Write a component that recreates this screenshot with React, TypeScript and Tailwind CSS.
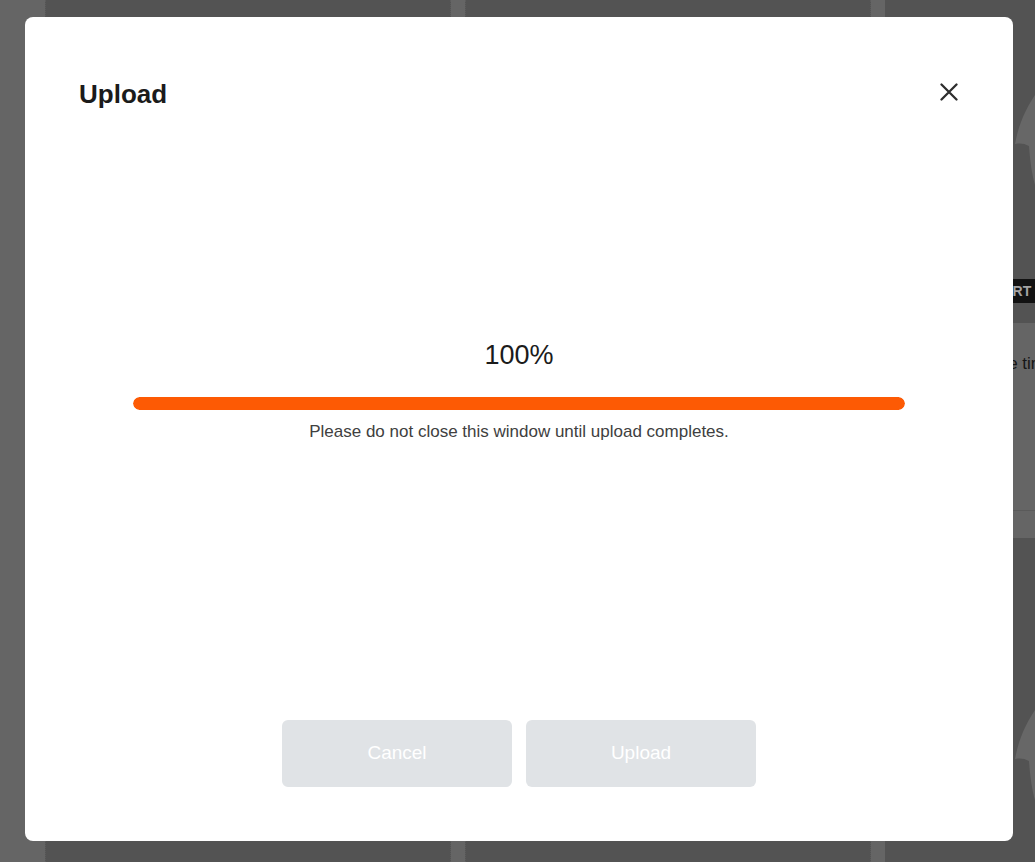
import React from "react";

const font = { fontFamily: '"Liberation Sans", Arial, Helvetica, sans-serif' };

// picture area of a background card; only its left edge peeks out behind the modal
function CardImage({ withLabel }: { withLabel?: boolean }) {
  return (
    <div className="relative h-[400px] shrink-0 bg-[#535353]">
      <svg
        className="absolute left-0 top-0"
        width="406"
        height="400"
        viewBox="0 0 406 400"
        aria-hidden="true"
      >
        <path
          d="M130,221 C133,205 139,188 150,172 L170,172 L170,262 L150,262 C147,252 145,238 144,223 C139,220 134,220 130,221 Z"
          fill="#676767"
        />
      </svg>
      {withLabel && (
        <div className="absolute left-[90px] bottom-[20px] h-[24px] px-[6px] flex items-center bg-[#121212]">
          <span className="text-[14px] font-bold text-[#a3a3a3] tracking-wide">
            SHORT
          </span>
        </div>
      )}
    </div>
  );
}

function Backdrop() {
  return (
    <div className="h-[862px] w-full overflow-hidden bg-[#656565] flex gap-[14px] pl-[45px]">
      <div className="w-[406px] shrink-0 bg-[#535353] border-x border-dotted border-[#5c5c5c]" />
      <div className="w-[406px] shrink-0 bg-[#535353] border-x border-dotted border-[#5c5c5c]" />
      <div className="w-[406px] shrink-0 flex flex-col -mt-[77px]">
        <CardImage withLabel />
        <div className="h-[215px] shrink-0 bg-[#656565] flex flex-col">
          <p className="pl-[6px] pt-[28px] text-[17px] text-[#161616] whitespace-nowrap">
            Keep up with the times
          </p>
          <div className="mt-auto h-[28px] border-t border-[#5a5a5a]" />
        </div>
        <CardImage />
      </div>
    </div>
  );
}

function CloseIcon() {
  return (
    <svg width="18" height="18" viewBox="0 0 18 18" aria-hidden="true">
      <path
        d="M1.5 1.5 L16.5 16.5 M16.5 1.5 L1.5 16.5"
        stroke="#2e2e2e"
        strokeWidth="2.3"
        strokeLinecap="round"
      />
    </svg>
  );
}

export default function App() {
  const progress = 100;

  return (
    <div className="relative w-full h-[862px] overflow-hidden" style={font}>
      <Backdrop />

      {/* modal */}
      <div className="absolute inset-0 flex items-start pl-[25px] pt-[17px]">
        <div
          className="w-[988px] h-[824px] bg-white rounded-[8px] flex flex-col"
          role="dialog"
          aria-label="Upload"
        >
          <div className="flex items-start justify-between pl-[54px] pr-[55px] pt-[61px]">
            <h1 className="text-[26px] leading-[32px] font-semibold text-[#1b1b1b]">
              Upload
            </h1>
            <button
              className="mt-[5px] w-[18px] h-[18px] flex items-center justify-center"
              aria-label="Close"
            >
              <CloseIcon />
            </button>
          </div>

          <div className="flex flex-col items-center mt-[229px]">
            <div className="text-[27px] leading-[32px] text-[#1b1b1b]">
              {progress}%
            </div>
            <div className="mt-[26px] w-[772px] h-[13px] rounded-full bg-[#f2f2f2] overflow-hidden">
              <div
                className="h-full rounded-full bg-[#fd5a04]"
                style={{ width: `${progress}%` }}
              />
            </div>
            <p className="mt-[12px] text-[17px] leading-[20px] text-[#404040]">
              Please do not close this window until upload completes.
            </p>
          </div>

          <div className="flex-1" />

          <div className="flex justify-center gap-[14px] pb-[54px]">
            <button className="w-[230px] h-[67px] rounded-[6px] bg-[#e0e3e6] text-white text-[19px]">
              Cancel
            </button>
            <button className="w-[230px] h-[67px] rounded-[6px] bg-[#e0e3e6] text-white text-[19px]">
              Upload
            </button>
          </div>
        </div>
      </div>
    </div>
  );
}
